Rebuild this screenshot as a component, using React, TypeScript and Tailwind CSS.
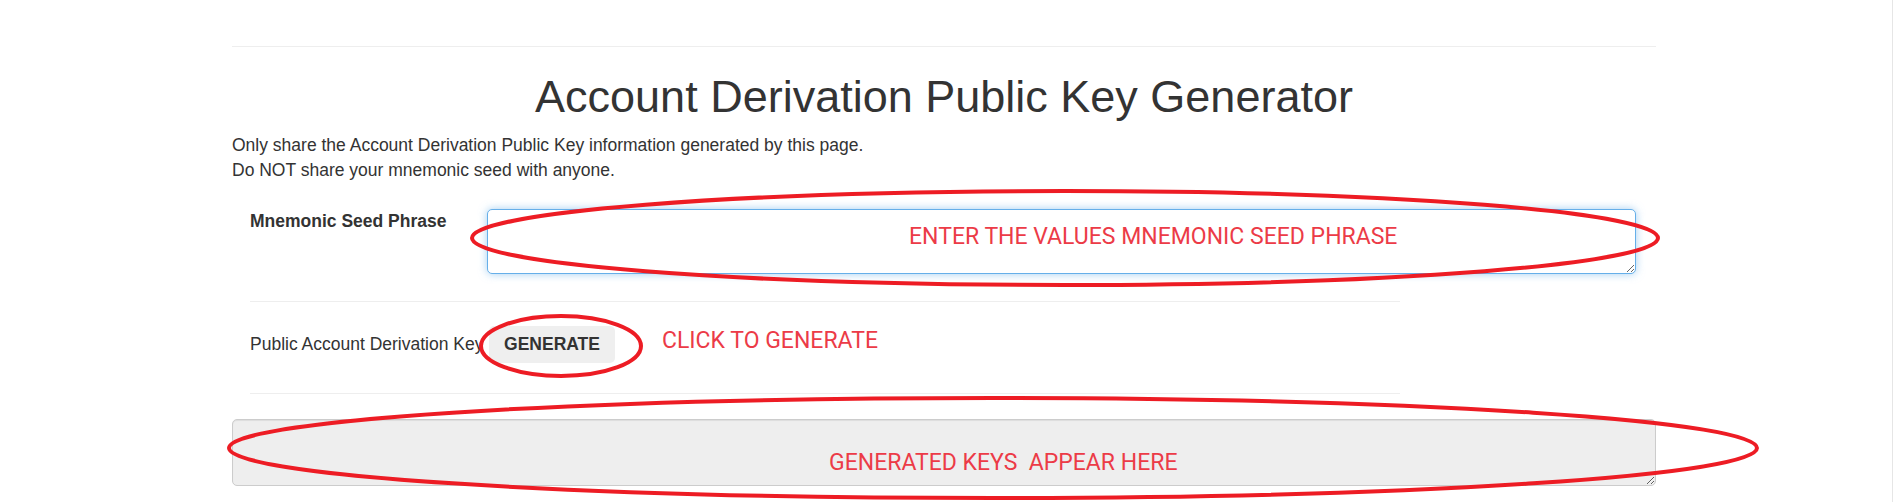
import React from 'react'

// red paint-style annotations that lie over the page
const Annotations = () => {
	return (
		<div className="pointer-events-none absolute inset-0">
			<svg className="absolute inset-0" width={1895} height={502} viewBox="0 0 1895 502">
				<ellipse cx={1065} cy={238} rx={593} ry={47} fill="none" stroke="#ed1c24" strokeWidth={4} />
				<ellipse cx={561} cy={346} rx={80} ry={30} fill="none" stroke="#ed1c24" strokeWidth={4} />
				<ellipse cx={993} cy={448} rx={764} ry={50} fill="none" stroke="#ed1c24" strokeWidth={4} />
			</svg>
			<p className="absolute left-[909px] top-[225px] whitespace-pre font-['Roboto',sans-serif] text-[23px] leading-none text-[#ec3b47]">
				ENTER THE VALUES MNEMONIC SEED PHRASE
			</p>
			<p className="absolute left-[662px] top-[329px] whitespace-pre font-['Roboto',sans-serif] text-[23px] leading-none text-[#ec3b47]">
				CLICK TO GENERATE
			</p>
			<p className="absolute left-[829px] top-[451px] whitespace-pre font-['Roboto',sans-serif] text-[23px] leading-none text-[#ec3b47]">
				GENERATED KEYS  APPEAR HERE
			</p>
		</div>
	)
}

const App = () => {
	return (
		<div className="relative flex h-[502px] w-full overflow-hidden bg-white font-['Liberation_Sans',Arial,sans-serif] text-[#333]">
			<main className="flex-1 pl-[232px]">
				<div className="w-[1424px]">
					<hr className="mt-[46px] border-t border-[#eee]" />
					<h1 className="mt-[25px] text-center text-[45px] leading-[49.5px] font-normal">
						Account Derivation Public Key Generator
					</h1>
					<div className="mt-[11.5px] text-[17.5px] leading-[25px]">
						<p>Only share the Account Derivation Public Key information generated by this page.</p>
						<p>Do NOT share your mnemonic seed with anyone.</p>
					</div>

					<div className="ml-[18px] text-[17.5px] leading-[25px]">
						<div className="mt-[26px] flex items-start">
							<label className="w-[237px] shrink-0 font-bold">Mnemonic Seed Phrase</label>
							<textarea
								className="h-[65px] w-[1149px] resize rounded-[5px] border border-[#66afe9] bg-white px-3 py-2 shadow-[0_0_8px_rgba(102,175,233,0.6)] outline-none"
								readOnly
							/>
						</div>
						<hr className="mt-[27px] w-[1150px] border-t border-[#eee]" />
						<div className="mt-[24px] flex h-[37px] items-center">
							<label className="w-[239px] shrink-0 whitespace-nowrap">Public Account Derivation Key</label>
							<button className="h-[37px] w-[126px] rounded-[5px] bg-[#efefef] font-bold text-[#333]">
								GENERATE
							</button>
						</div>
						<hr className="mt-[30px] w-[1150px] border-t border-[#eee]" />
					</div>

					<textarea
						className="mt-[25px] block h-[67px] w-[1424px] resize rounded-[5px] border border-[#ccc] bg-[#eee] shadow-[inset_0_1px_1px_rgba(0,0,0,0.075)]"
						disabled
					/>
				</div>
			</main>
			<div className="w-[3px] border-l border-[#e6e6e6]" />
			<Annotations />
		</div>
	)
}

export default App
